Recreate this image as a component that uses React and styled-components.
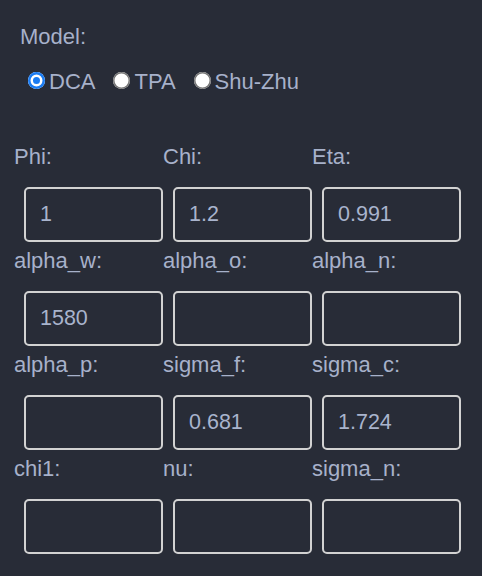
import React, { useState } from 'react';
import styled, { createGlobalStyle } from 'styled-components';

const GlobalStyle = createGlobalStyle`
    body {
        margin: 0;
        background: #282c37;
        font-family: "Liberation Sans", Arial, Helvetica, sans-serif;
    }
`;

const Panel = styled.div`
    width: 482px;
    min-height: 576px;
    padding-top: 25px;
    box-sizing: border-box;
    color: #a7b1ca;
    font-size: 22px;
    line-height: 24px;
`;

const ModelSection = styled.div`
    padding-left: 20px;
`;

const Caption = styled.div`
    line-height: 24px;
`;

const RadioRow = styled.div`
    display: flex;
    align-items: center;
    gap: 18px;
    margin-top: 21px;
    margin-left: 8px;
`;

const Option = styled.label`
    display: flex;
    align-items: center;
    gap: 4px;
    cursor: pointer;
`;

const Radio = styled.input`
    appearance: none;
    margin: -3px 0 0 0;
    width: 17px;
    height: 17px;
    border-radius: 50%;
    flex-shrink: 0;
    background: #ffffff;
    box-shadow: inset 0 0 0 1.5px #777777;

    &:checked {
        background: #1b7cf2;
        box-shadow: inset 0 0 0 2.5px #1b7cf2, inset 0 0 0 5px #ffffff;
    }
`;

const FieldGrid = styled.div`
    display: grid;
    grid-template-columns: repeat(3, 149px);
    margin-top: 51px;
    padding-left: 14px;
`;

const Field = styled.div`
    display: flex;
    flex-direction: column;
    align-items: flex-start;
    height: 104px;
`;

const FieldLabel = styled.label`
    line-height: 24px;
`;

const ValueInput = styled.input`
    box-sizing: border-box;
    width: 139px;
    height: 55px;
    margin: 18px 0 0 10px;
    padding: 0 14px;
    background: transparent;
    border: 2px solid #d2d2d2;
    border-radius: 5px;
    color: #a9b4cd;
    font-family: inherit;
    font-size: 21.5px;
    outline: none;
`;

const models = ['DCA', 'TPA', 'Shu-Zhu'];

const fields = [
    { name: 'Phi', value: '1' },
    { name: 'Chi', value: '1.2' },
    { name: 'Eta', value: '0.991' },
    { name: 'alpha_w', value: '1580' },
    { name: 'alpha_o', value: '' },
    { name: 'alpha_n', value: '' },
    { name: 'alpha_p', value: '' },
    { name: 'sigma_f', value: '0.681' },
    { name: 'sigma_c', value: '1.724' },
    { name: 'chi1', value: '' },
    { name: 'nu', value: '' },
    { name: 'sigma_n', value: '' },
];

function App() {
    const [model, setModel] = useState('DCA');
    const [values, setValues] = useState(
        Object.fromEntries(fields.map((f) => [f.name, f.value]))
    );

    return (
        <Panel>
            <GlobalStyle />
            <ModelSection>
                <Caption>Model:</Caption>
                <RadioRow>
                    {models.map((m) => (
                        <Option key={m}>
                            <Radio
                                type="radio"
                                name="model"
                                checked={model === m}
                                onChange={() => setModel(m)}
                            />
                            {m}
                        </Option>
                    ))}
                </RadioRow>
            </ModelSection>
            <FieldGrid>
                {fields.map((f) => (
                    <Field key={f.name}>
                        <FieldLabel htmlFor={f.name}>{f.name}:</FieldLabel>
                        <ValueInput
                            id={f.name}
                            value={values[f.name]}
                            onChange={(e) => setValues({ ...values, [f.name]: e.target.value })}
                        />
                    </Field>
                ))}
            </FieldGrid>
        </Panel>
    );
}

export default App;
